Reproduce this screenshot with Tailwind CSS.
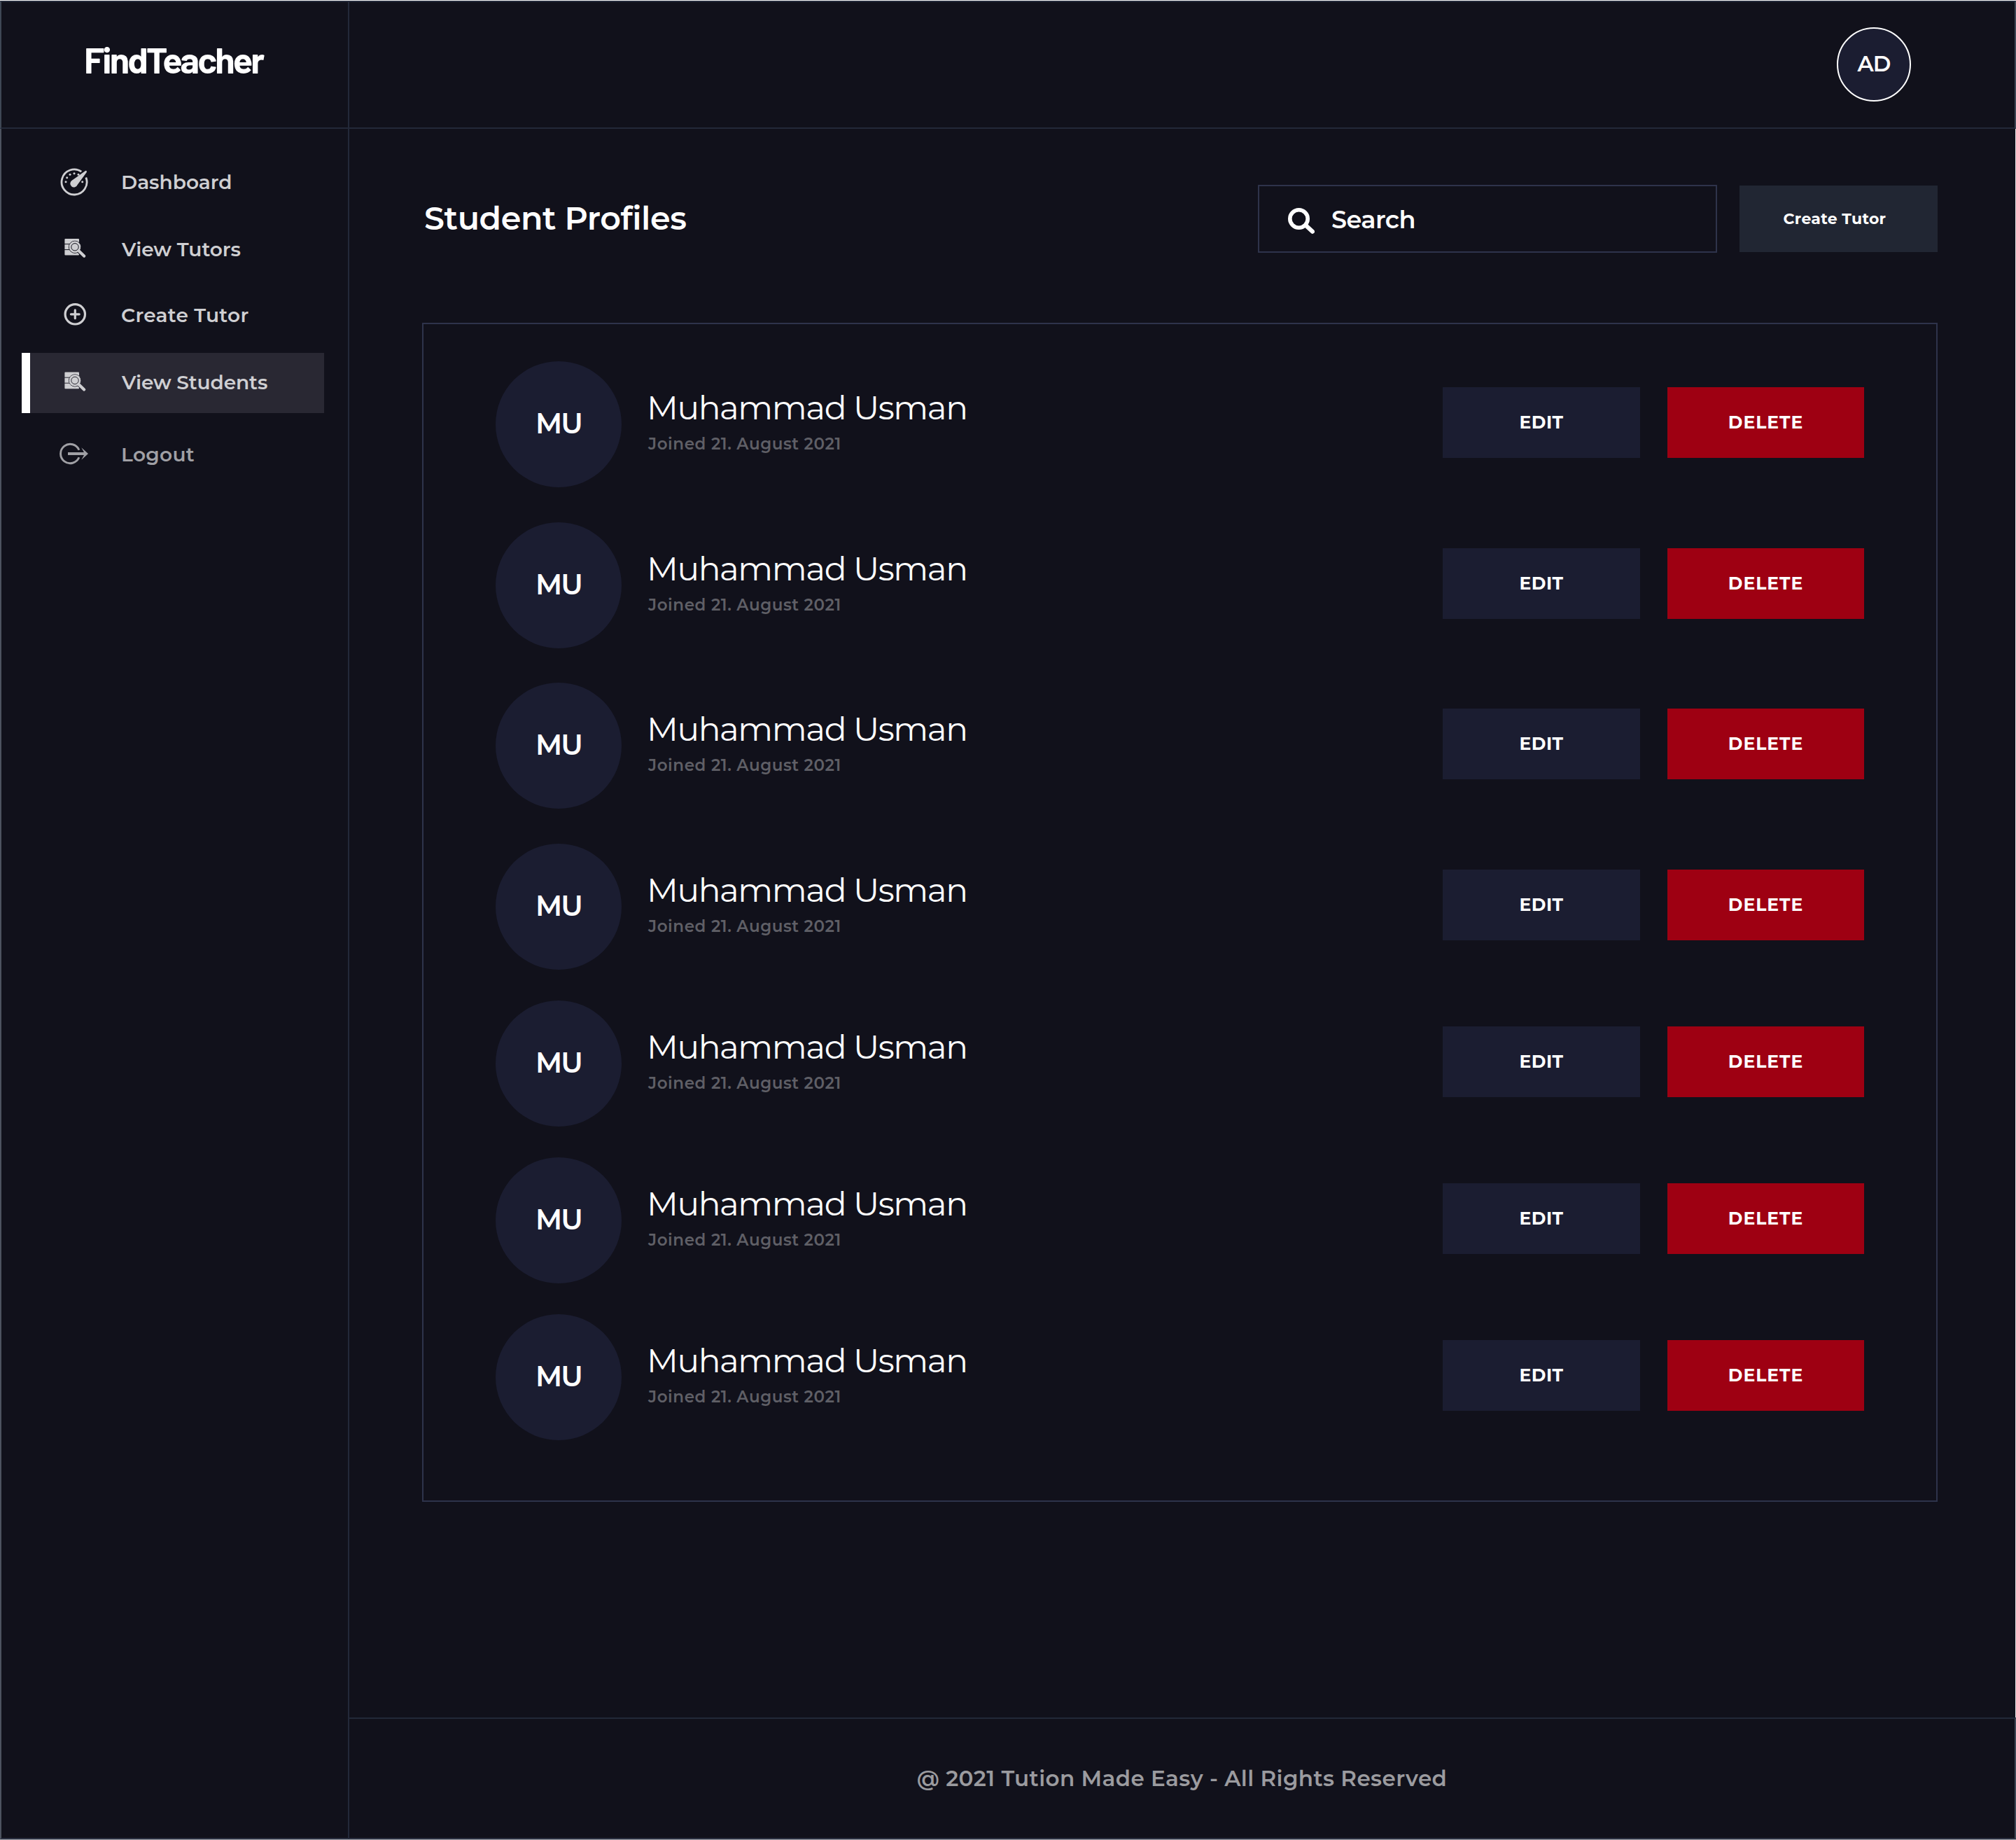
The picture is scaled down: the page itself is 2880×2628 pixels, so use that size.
<!DOCTYPE html>
<html lang="en">
<head>
<meta charset="utf-8">
<title>FindTeacher - Student Profiles</title>
<script src="https://cdn.jsdelivr.net/npm/@tailwindcss/browser@4"></script>
</head>
<body class="bg-[#11111b] font-['Montserrat','Inter',sans-serif] font-semibold text-white">
<div class="flex h-[2628px] w-[2880px] overflow-hidden border-t border-b border-t-white border-b-[#a9adb4]">

  <aside class="flex w-[499px] shrink-0 flex-col">
    <div class="flex h-[183px] shrink-0 border-y-2 border-r-2 border-l-2 border-y-[#232939] border-r-[#232939] border-l-[#3f4755] pt-[47px] pl-[118px]">
      <span class="font-['Barlow','Roboto',sans-serif] text-[52px] leading-[68px] font-bold tracking-[-2.8px]">FindTeacher</span>
    </div>
    <nav class="flex grow flex-col border-r-2 border-b-2 border-l-2 border-r-[#232939] border-b-[#2a2f3f] border-l-[#4d535f] pt-[33px] pl-[29px] text-[28px] leading-[34px] text-[#cfcfd2]">
      <a class="flex h-[86px] w-[432px] items-center gap-[45px] pl-[53px]">
        <svg class="size-[44px]" viewBox="0 0 44 44" fill="currentColor">
          <path d="M32.3 7.2A18 18 0 1 0 38.8 15.4" fill="none" stroke="currentColor" stroke-width="2.8"/>
          <path d="M38 6L19 19.6A5.3 5.3 0 1 0 26.6 26L39.8 8.1Q40.3 5.2 38 6Z"/>
          <circle cx="10" cy="21.7" r="1.5"/><circle cx="11.7" cy="15.7" r="1.5"/><circle cx="16" cy="11.3" r="1.5"/><circle cx="22" cy="9.7" r="1.5"/><circle cx="28" cy="11.3" r="1.5"/><circle cx="33.7" cy="21.7" r="1.5"/>
        </svg>
        <span>Dashboard</span>
      </a>
      <a class="mt-[10px] flex h-[86px] w-[432px] items-center gap-[45px] pl-[53px]">
        <svg class="size-[44px] stroke-[#11111b]" viewBox="0 0 44 44" fill="currentColor">
          <rect x="8.4" y="7" width="20.6" height="23.6" rx="1" stroke="none"/>
          <path d="M8 14.6H29M8 22.6H29" stroke-width="1"/>
          <circle cx="23" cy="18.8" r="8.6" stroke-width="1"/>
          <path d="M28.5 24.3L36 31.6" stroke-width="6" stroke-linecap="round"/>
          <path d="M28.5 24.3L36.2 31.8" stroke="currentColor" stroke-width="4.2" stroke-linecap="round"/>
          <circle cx="23" cy="18.8" r="8.2" stroke="none"/>
          <circle cx="23" cy="18.8" r="5.2" stroke-width="1"/>
        </svg>
        <span class="ml-px">View Tutors</span>
      </a>
      <a class="mt-[8px] flex h-[86px] w-[432px] items-center gap-[45px] pl-[53px]">
        <svg class="size-[44px]" viewBox="0 0 44 44" fill="none" stroke="currentColor" stroke-width="3.2" stroke-linecap="round">
          <circle cx="23.3" cy="20.8" r="14.2"/><path d="M17.4 20.8H29.2M23.3 14.9V26.7"/>
        </svg>
        <span class="tracking-[0.3px]">Create Tutor</span>
      </a>
      <a class="mt-[11px] flex h-[86px] w-[432px] items-center gap-[45px] border-l-12 border-white bg-[#292833] pb-[2px] pl-[41px]">
        <svg class="size-[44px] stroke-[#292833]" viewBox="0 0 44 44" fill="currentColor">
          <rect x="8.4" y="7.6" width="20.6" height="23.6" rx="1" stroke="none"/>
          <path d="M8 15.2H29M8 23.2H29" stroke-width="1"/>
          <circle cx="23" cy="19.4" r="8.6" stroke-width="1"/>
          <path d="M28.5 24.9L36 32.2" stroke-width="6" stroke-linecap="round"/>
          <path d="M28.5 24.9L36.2 32.4" stroke="currentColor" stroke-width="4.2" stroke-linecap="round"/>
          <circle cx="23" cy="19.4" r="8.2" stroke="none"/>
          <circle cx="23" cy="19.4" r="5.2" stroke-width="1"/>
        </svg>
        <span class="ml-px tracking-[-0.1px]">View Students</span>
      </a>
      <a class="mt-[16px] flex h-[86px] w-[432px] items-center gap-[45px] pl-[53px] text-[#a0a0a5]">
        <svg class="size-[44px]" viewBox="0 0 44 44" fill="currentColor">
          <path d="M28.9 15.7A13.7 13.7 0 1 0 28.9 26.3" fill="none" stroke="currentColor" stroke-width="2.9"/>
          <path d="M13 19H36L32.3 12.3L42 21L32.3 29.7L36 23H13Z"/>
        </svg>
        <span class="tracking-[0.3px]">Logout</span>
      </a>
    </nav>
  </aside>

  <div class="flex grow flex-col">
    <header class="flex h-[183px] shrink-0 items-center justify-end border-y-2 border-r-2 border-y-[#232939] border-r-[#3f4755] pr-[148px] pb-px">
      <div class="flex size-[106px] items-center justify-center rounded-full border-2 border-white bg-[#1b1d31] pb-px text-[31px] tracking-[-0.8px]">AD</div>
    </header>

    <main class="flex grow flex-col border-r border-[#e8e8ea] pr-[111px] pl-[104px]">
      <div class="mt-[80px] flex h-[97px] items-center">
        <h1 class="ml-[3px] grow pb-[2px] text-[46px] leading-[56px] tracking-[-0.4px]">Student Profiles</h1>
        <div class="flex h-[97px] w-[656px] items-center gap-[24px] border-2 border-[#2e334b] pl-[41px]">
          <svg class="mt-[6px] h-[37px] w-[38px]" viewBox="0 0 38 37" fill="none" stroke="#fff" stroke-linecap="round">
            <circle cx="15.5" cy="15.5" r="12.7" stroke-width="5.6"/><path d="M25.5 25L35 33.8" stroke-width="6"/>
          </svg>
          <span class="pt-[2px] text-[35px] leading-[42px] tracking-[-0.5px]">Search</span>
        </div>
        <button class="ml-[32px] h-[95px] w-[283px] bg-[#212633] pr-[11px] text-[22px] font-bold tracking-[0.3px]">Create Tutor</button>
      </div>

      <section id="students" class="mt-[100px] h-[1684px] border-2 border-[#2e334b] px-[103px] pt-[53px]"></section>
    </main>

    <footer class="flex h-[174px] shrink-0 items-center justify-center border-y-2 border-r-2 border-t-[#222938] border-r-[#3f4755] border-b-[#2a2f3f] text-[31px] tracking-[0.4px] text-[#9b9b9f]">@ 2021 Tution Made Easy - All Rights Reserved</footer>
  </div>
</div>

<script>
  const gaps = ['', 'mt-[50px]', 'mt-[49px]', 'mt-[50px]', 'mt-[44px]', 'mt-[44px]', 'mt-[44px]'];
  document.getElementById('students').innerHTML = gaps.map(gap => `
    <div class="flex h-[180px] ${gap}">
      <div class="flex size-[180px] items-center justify-center rounded-full bg-[#1b1d31] pb-[2px] text-[40px] tracking-[-2px]">MU</div>
      <div class="ml-[36px] grow pt-[37px]">
        <p class="text-[47px] leading-[60px] font-normal tracking-[-1.4px]">Muhammad Usman</p>
        <p class="mt-[6px] ml-[2px] text-[23px] leading-[30px] tracking-[0.58px] text-[#5f5f66]">Joined 21. August 2021</p>
      </div>
      <button class="mt-[37px] h-[101px] w-[282px] bg-[#1b1d31] text-[25px] font-bold tracking-[0.46px]">EDIT</button>
      <button class="mt-[37px] ml-[39px] h-[101px] w-[281px] bg-[#9e0012] text-[25px] font-bold tracking-[1px]">DELETE</button>
    </div>`).join('');
</script>
</body>
</html>
